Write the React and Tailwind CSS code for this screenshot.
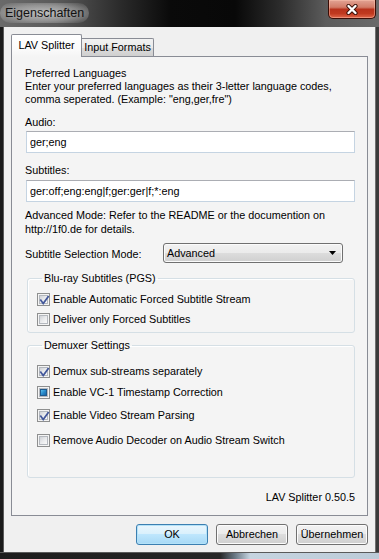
import React from "react";

function Box({ state }) {
  return (
    <span className="relative w-[13px] h-[13px] shrink-0 border border-[#8e8f8f] bg-[#f4f4f4] p-[1px] flex">
      <span className="flex-1 flex items-center justify-center border border-[#b4b8be] bg-[linear-gradient(135deg,#cfd2d7_0%,#e9eaec_50%,#fafafa_100%)]">
        {state === "mixed" && (
          <span className="w-[7px] h-[7px] border border-[#1f5b8f] bg-[linear-gradient(135deg,#5cc0ee_0%,#2a8ccc_50%,#1b66a6_100%)]" />
        )}
      </span>
      {state === "checked" && (
        <svg className="absolute inset-0" width="13" height="13" viewBox="0 0 13 13">
          <path d="M2.8 6.2 L5.2 9.6 L10.2 2.6" fill="none" stroke="#42579a" strokeWidth="1.7" strokeLinecap="square" strokeLinejoin="miter" />
        </svg>
      )}
    </span>
  );
}

function CheckRow({ state, label, className = "" }) {
  return (
    <div className={"flex items-center h-[13px] gap-[3px] " + className}>
      <Box state={state} />
      <span className="leading-[13px] whitespace-nowrap">{label}</span>
    </div>
  );
}

function Btn({ children, primary }) {
  return (
    <div
      className={
        "w-[72px] h-[21px] rounded-[3px] border flex items-center justify-center leading-none " +
        (primary
          ? "border-[#3c7fb1] bg-[linear-gradient(180deg,#eaf6fd_0%,#d9f0fc_48%,#bee6fd_50%,#a7d9f5_100%)] shadow-[inset_0_0_0_1px_#b4e2f8]"
          : "border-[#707070] bg-[linear-gradient(180deg,#f2f2f2_0%,#ebebeb_48%,#dddddd_50%,#cfcfcf_100%)] shadow-[inset_0_0_0_1px_#fcfcfc]")
      }
    >
      {children}
    </div>
  );
}

export default function App() {
  return (
    <div className="w-[379px] h-[559px] flex flex-col overflow-hidden [font-family:'Liberation_Sans',Arial,sans-serif] text-[10.8px] text-black bg-[linear-gradient(90deg,#6a6a6a_0%,#5a5a5a_15%,#2a2a2a_32%,#0a0a0a_45%,#080808_62%,#2c2c2c_74%,#5c5c5c_86%,#6a6a6a_100%)]">
      {/* title bar */}
      <div className="h-[27px] shrink-0 flex items-start justify-between">
        <div className="mt-[3px] ml-[0px] px-[5px] h-[20px] flex items-center text-[12.5px] text-[#111] rounded-[10px] bg-[radial-gradient(ellipse_at_center,rgba(255,255,255,0.6)_0%,rgba(225,225,225,0.4)_55%,rgba(200,200,200,0)_100%)]">
          Eigenschaften
        </div>
        <div className="mr-[3px] w-[48px] h-[19px] rounded-b-[5px] border border-t-0 border-[#3a0d06] flex items-center justify-center bg-[linear-gradient(180deg,#e2a394_0%,#d27c68_40%,#b8321c_52%,#c0391f_75%,#e0664a_100%)] shadow-[inset_0_0_0_1px_rgba(255,200,180,0.45)]">
          <svg width="14" height="11" viewBox="0 0 14 11">
            <path d="M3.5 2 L10.5 9 M10.5 2 L3.5 9" stroke="#3a1008" strokeWidth="4.2" strokeLinecap="round" />
            <path d="M3.5 2 L10.5 9 M10.5 2 L3.5 9" stroke="#ffffff" strokeWidth="2.4" strokeLinecap="round" />
          </svg>
        </div>
      </div>

      {/* body */}
      <div className="flex-1 flex">
        <div className="w-[4px] bg-[#1a1a1a] border-r border-[#5a5a5a]" />
        <div className="flex-1 flex flex-col bg-[#f0f0f0] pt-[7px] px-[7px]">
          {/* tabs */}
          <div className="h-[22px] flex items-end">
            <div className="relative z-10 w-[71px] h-[23px] -mb-px border border-b-0 border-[#898c95] rounded-t-[2px] bg-[linear-gradient(180deg,#ffffff_0%,#fbfbfb_60%,#f4f4f4_100%)] flex items-center justify-center pb-[1px]">
              LAV Splitter
            </div>
            <div className="w-[72px] h-[18px] border border-l-0 border-b-0 border-[#898c95] rounded-tr-[2px] bg-[linear-gradient(180deg,#f2f2f2_0%,#ebebeb_50%,#dddddd_51%,#cfcfcf_100%)] flex items-center justify-center">
              Input Formats
            </div>
          </div>

          {/* page */}
          <div className="h-[460px] border border-[#898c95] bg-[#f4f4f4] pl-[13px] pr-[12px] pt-[10px] flex flex-col">
            <div className="leading-[13px]">
              <div>Preferred Languages</div>
              <div>Enter your preferred languages as their 3-letter language codes,</div>
              <div>comma seperated. (Example: "eng,ger,fre")</div>
            </div>

            <div className="mt-[10px] leading-[13px]">Audio:</div>
            <div className="mt-[2px] ml-[1px] h-[22px] border border-[#c5d4e2] border-t-[#abadb3] bg-white flex items-center pl-[3px]">
              ger;eng
            </div>

            <div className="mt-[11px] leading-[13px]">Subtitles:</div>
            <div className="mt-[3px] ml-[1px] h-[22px] border border-[#c5d4e2] border-t-[#abadb3] bg-white flex items-center pl-[3px]">
              ger:off;eng:eng|f;ger:ger|f;*:eng
            </div>

            <div className="mt-[6px] leading-[14px]">
              <div>Advanced Mode: Refer to the README or the documention on</div>
              <div>http://1f0.de for details.</div>
            </div>

            <div className="mt-[7px] flex items-center">
              <div className="w-[138px] pt-[2px]">Subtitle Selection Mode:</div>
              <div className="w-[180px] h-[20px] rounded-[3px] border border-[#707070] bg-[linear-gradient(180deg,#f2f2f2_0%,#ebebeb_48%,#dddddd_50%,#cfcfcf_100%)] shadow-[inset_0_0_0_1px_#fbfbfb] flex items-center justify-between pl-[3px] pr-[6px]">
                <span>Advanced</span>
                <svg width="7" height="4" viewBox="0 0 7 4">
                  <path d="M0 0 L7 0 L3.5 4 Z" fill="#000" />
                </svg>
              </div>
            </div>

            <fieldset className="mt-[8px] ml-[2px] border border-[#d5dfe5] rounded-[3px] shadow-[inset_1px_1px_0_#fff] pl-[9px] pb-[6px]">
              <legend className="ml-[5px] px-[2px] leading-[14px]">Blu-ray Subtitles (PGS)</legend>
              <CheckRow className="mt-[8px]" state="checked" label="Enable Automatic Forced Subtitle Stream" />
              <CheckRow className="mt-[7px]" state="none" label="Deliver only Forced Subtitles" />
            </fieldset>

            <fieldset className="mt-[5px] ml-[2px] border border-[#d5dfe5] rounded-[3px] shadow-[inset_1px_1px_0_#fff] pl-[9px] pb-[30px]">
              <legend className="ml-[5px] px-[2px] leading-[14px]">Demuxer Settings</legend>
              <CheckRow className="mt-[13px]" state="checked" label="Demux sub-streams separately" />
              <CheckRow className="mt-[8px]" state="mixed" label="Enable VC-1 Timestamp Correction" />
              <CheckRow className="mt-[10px]" state="checked" label="Enable Video Stream Parsing" />
              <CheckRow className="mt-[12px]" state="none" label="Remove Audio Decoder on Audio Stream Switch" />
            </fieldset>

            <div className="mt-[12px] leading-[14px] text-right">LAV Splitter 0.50.5</div>
          </div>

          {/* buttons */}
          <div className="mt-[8px] h-[21px] flex justify-end gap-[8px]">
            <Btn primary>OK</Btn>
            <Btn>Abbrechen</Btn>
            <Btn>Übernehmen</Btn>
          </div>
        </div>
        <div className="w-[4px] bg-[#3a3a3a] border-l border-[#707070]" />
      </div>

      {/* bottom frame */}
      <div className="h-[7px] shrink-0 bg-[linear-gradient(90deg,#1c1c1c_0%,#262626_58%,#6a7884_62%,#c6d4e0_66%,#bccbd8_100%)] border-t border-[#5a5a5a]" />
    </div>
  );
}
